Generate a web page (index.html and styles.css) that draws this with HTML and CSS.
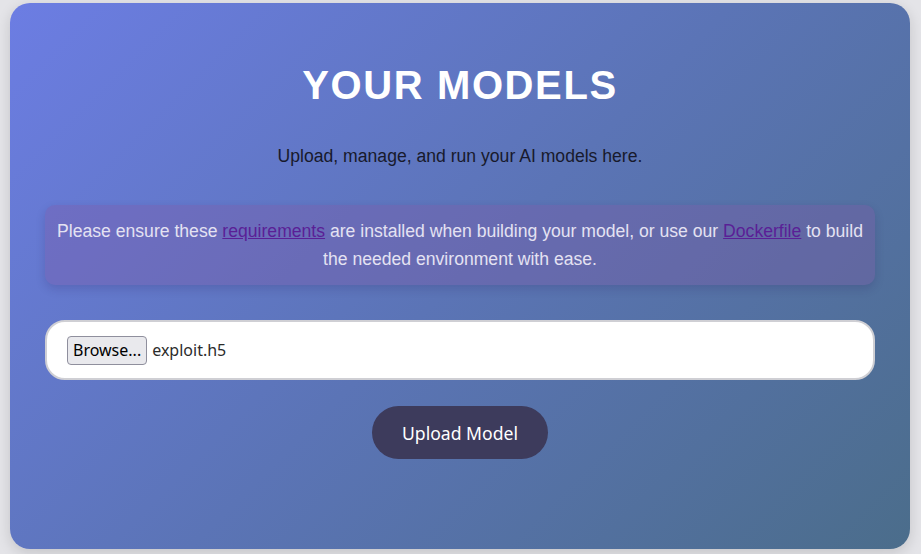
FILE: index.html
```html
<!DOCTYPE html>
<html lang="en">
<head>
<meta charset="utf-8">
<title>Your Models</title>
<link rel="stylesheet" href="styles.css">
</head>
<body>
<main class="card">
  <h1 class="title">YOUR MODELS</h1>
  <p class="subtitle">Upload, manage, and run your AI models here.</p>
  <div class="notice">
    Please ensure these <a href="#" class="link">requirements</a> are installed when building your model, or use our <a href="#" class="link">Dockerfile</a> to build the needed environment with ease.
  </div>
  <form class="upload-form">
    <label class="file-field">
      <span class="browse-btn">Browse...</span>
      <span class="file-name">exploit.h5</span>
    </label>
    <button type="button" class="upload-btn">Upload Model</button>
  </form>
</main>
</body>
</html>
```

FILE: styles.css
```css
html, body {
  margin: 0;
  padding: 0;
}
body {
  background: #e4e4e8;
  font-family: "Liberation Sans", Arial, sans-serif;
  padding: 3px 11px 5px 10px;
  box-sizing: border-box;
  height: 554px;
  overflow: hidden;
}
.card {
  box-sizing: border-box;
  height: 546px;
  border-radius: 20px;
  background: linear-gradient(135deg, #6c7de3 0%, #5b74b6 50%, #4b6d8b 100%);
  box-shadow: 0 4px 14px rgba(0, 0, 0, 0.14);
  padding: 59px 35px 0;
  display: flex;
  flex-direction: column;
  align-items: stretch;
}
.title {
  margin: 0;
  text-align: center;
  color: #ffffff;
  font-size: 40px;
  font-weight: 700;
  letter-spacing: 1.6px;
  line-height: 46px;
}
.subtitle {
  margin: 38px 0 0;
  text-align: center;
  color: #181a2c;
  font-size: 17.6px;
  line-height: 20px;
}
.notice {
  margin-top: 39px;
  padding: 12px 10px;
  border-radius: 10px;
  background: rgba(125, 90, 165, 0.35);
  box-shadow: 0 4px 10px rgba(40, 30, 90, 0.18);
  color: #e4e2f2;
  font-size: 17.6px;
  line-height: 28px;
  text-align: center;
}
.link {
  color: #5a1f96;
  text-decoration: underline;
}
.upload-form {
  margin-top: 35px;
  display: flex;
  flex-direction: column;
  align-items: center;
}
.file-field {
  align-self: stretch;
  box-sizing: border-box;
  height: 60px;
  background: #ffffff;
  border: 2px solid #cfcfd4;
  border-radius: 20px;
  padding: 0 20px;
  display: flex;
  align-items: center;
  gap: 5px;
  font-family: "Noto Sans", "Open Sans", sans-serif;
  font-size: 16px;
  color: #2b2b2b;
}
.browse-btn {
  box-sizing: border-box;
  height: 29px;
  padding: 0 5px;
  display: inline-flex;
  align-items: center;
  background: #e9e9ed;
  border: 1px solid #8f8f9d;
  border-radius: 4px;
  color: #000;
}
.upload-btn {
  margin-top: 26px;
  height: 53px;
  padding: 0 30px;
  border: none;
  border-radius: 27px;
  background: #3d3b5c;
  color: #ffffff;
  font-family: "Noto Sans", "Open Sans", sans-serif;
  font-size: 17.6px;
  cursor: pointer;
}
```
